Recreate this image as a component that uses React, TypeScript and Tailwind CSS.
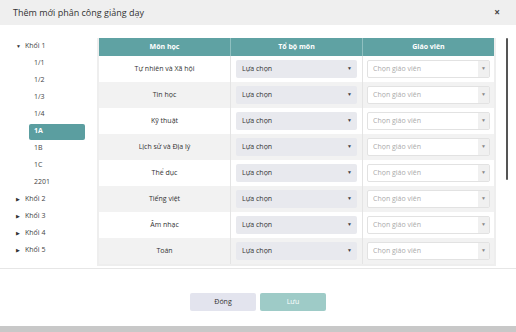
import React from "react";

const subjects = [
  "Tự nhiên và Xã hội",
  "Tin học",
  "Kỹ thuật",
  "Lịch sử và Địa lý",
  "Thể dục",
  "Tiếng việt",
  "Âm nhạc",
  "Toán",
];

const classes = ["1/1", "1/2", "1/3", "1/4", "1A", "1B", "1C", "2201"];

const Caret = ({ down }: { down?: boolean }) => (
  <span className="inline-block w-[7px] text-[5px] leading-none text-[#333]">
    {down ? "▼" : "▶"}
  </span>
);

const App = () => {
  return (
    <div
      className="w-[516px] h-[332px] bg-white flex flex-col overflow-hidden text-[#333]"
      style={{ fontFamily: '"Open Sans", "Noto Sans", sans-serif' }}
    >
      <div className="h-[25px] shrink-0 bg-[#efefef] flex items-center justify-between pl-[13px] pr-[16px]">
        <span className="text-[9px] text-[#333]">Thêm mới phân công giảng dạy</span>
        <span className="text-[10px] font-bold text-[#444]">×</span>
      </div>

      <div className="h-[243px] shrink-0 flex">
        <div className="w-[97px] shrink-0 pt-[13px] text-[7px] text-[#444]">
          <div className="h-[17px] flex items-center pl-[16px] gap-[2px]">
            <Caret down />
            <span>Khối 1</span>
          </div>
          {classes.map((c) => (
            <div key={c} className="h-[17px] flex items-center pl-[29px]">
              {c === "1A" ? (
                <div className="w-[56px] h-[16px] bg-[#5b9ea0] rounded-[2px] text-white font-bold flex items-center pl-[5px]">
                  {c}
                </div>
              ) : (
                <span className="pl-[5px]">{c}</span>
              )}
            </div>
          ))}
          {["Khối 2", "Khối 3", "Khối 4", "Khối 5"].map((k) => (
            <div key={k} className="h-[17px] flex items-center pl-[16px] gap-[2px]">
              <Caret />
              <span>{k}</span>
            </div>
          ))}
        </div>

        <div className="flex-1 flex pt-[13px]">
          <div className="w-[399px] overflow-hidden border-x-[2px] border-b-[2px] border-[#eeeeee] self-start">
            <div className="grid grid-cols-[132px_132px_131px] h-[18px] bg-[#5fa2a3] text-white text-[7px] font-bold">
              <div className="flex items-center justify-center border-r border-[#8fc0c0]">Môn học</div>
              <div className="flex items-center justify-center border-r border-[#8fc0c0]">Tổ bộ môn</div>
              <div className="flex items-center justify-center">Giáo viên</div>
            </div>
            {subjects.map((s, i) => (
              <div
                key={s}
                className={`grid grid-cols-[132px_132px_131px] h-[26px] text-[7px] ${
                  i % 2 === 1 ? "bg-[#f2f2f2]" : "bg-white"
                }`}
              >
                <div className="flex items-center justify-center border-r border-[#e4e4e4]">{s}</div>
                <div className="flex items-center px-[5px] border-r border-[#e4e4e4]">
                  <div className="w-full h-[18px] bg-[#e8e9ee] rounded-[2px] flex items-center justify-between pl-[6px] pr-[5px]">
                    <span>Lựa chọn</span>
                    <span className="text-[5px] text-[#444]">▼</span>
                  </div>
                </div>
                <div className="flex items-center px-[4px]">
                  <div className="w-full h-[18px] bg-white border border-[#e2e2e2] rounded-[2px] flex items-center justify-between">
                    <span className="pl-[5px] text-[#aaa]">Chọn giáo viên</span>
                    <span className="w-[11px] h-full bg-[#f0f0f0] flex items-center justify-center text-[5px] text-[#888]">▼</span>
                  </div>
                </div>
              </div>
            ))}
          </div>
          <div className="ml-[10px] w-[3px]">
            <div className="w-[2px] h-[142px] bg-[#555] rounded-full" />
          </div>
        </div>
      </div>

      <div className="h-[58px] shrink-0 border-t border-[#e6e6e6] flex items-start justify-center pt-[24px] gap-[4px]">
        <button className="w-[66px] h-[18px] bg-[#e3e4ee] rounded-[2px] text-[7px] text-[#333]">Đóng</button>
        <button className="w-[66px] h-[18px] bg-[#9ecbc7] rounded-[2px] text-[7px] text-white">Lưu</button>
      </div>
      <div className="flex-1 bg-[#c8c8c8]" />
    </div>
  );
};

export default App;
